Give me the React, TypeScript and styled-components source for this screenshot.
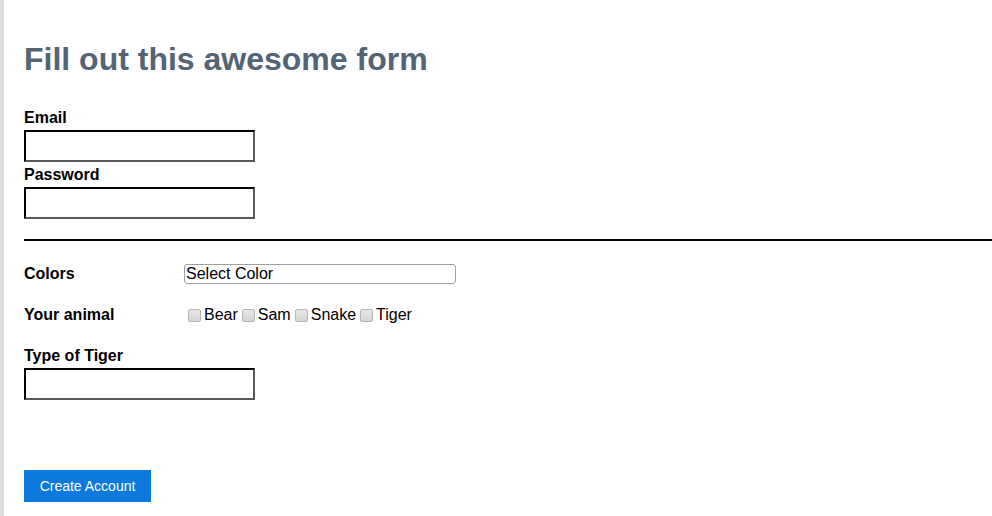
import React from "react";
import styled, { createGlobalStyle } from "styled-components";

const Global = createGlobalStyle`
  html, body { margin: 0; padding: 0; background: #fff; }
  body { font-family: "Liberation Sans", Arial, sans-serif; color: #000; }
`;

const Page = styled.div`
  min-height: 516px;
  box-sizing: border-box;
  border-left: 4px solid #dcdcdc;
  padding: 20px 0 0 20px;
`;

const Title = styled.h1`
  margin: 21px 0 31px;
  font-size: 32px;
  line-height: 37px;
  font-weight: bold;
  color: #536474;
`;

const Form = styled.form`
  display: flex;
  flex-direction: column;
`;

const FieldLabel = styled.label`
  display: block;
  font-size: 16px;
  line-height: 18px;
  font-weight: bold;
  margin: 0 0 3px;
`;

const TextInput = styled.input`
  display: block;
  box-sizing: border-box;
  width: 231px;
  height: 32px;
  margin: 0 0 4px;
  border-width: 2px;
  border-style: solid;
  border-color: #000 #5a5a5a #5a5a5a #000;
  padding: 0 4px;
  font-size: 16px;
  font-family: inherit;
  outline: none;
`;

const Rule = styled.hr`
  margin: 16px 0 23px;
  border: 0;
  height: 2px;
  background: #000;
`;

const Row = styled.div<{ $gap?: number }>`
  display: grid;
  grid-template-columns: 160px 1fr;
  align-items: center;
  margin-bottom: ${(p) => p.$gap ?? 22}px;
`;

const RowLabel = styled.span`
  font-size: 16px;
  line-height: 18px;
  font-weight: bold;
`;

const Select = styled.select`
  appearance: none;
  -webkit-appearance: none;
  box-sizing: border-box;
  width: 272px;
  height: 20px;
  border: 1px solid #a0a0a0;
  border-radius: 3px;
  background: #fff;
  padding: 0 1px;
  font-size: 16px;
  line-height: 18px;
  font-family: inherit;
  color: #000;
`;

const Options = styled.div`
  display: flex;
  align-items: center;
  font-size: 16px;
  line-height: 18px;
`;

const Choice = styled.label`
  display: flex;
  align-items: center;
`;

const Box = styled.input`
  appearance: none;
  -webkit-appearance: none;
  box-sizing: border-box;
  width: 13px;
  height: 13px;
  margin: 0 3px 0 4px;
  border: 1px solid #b4b4b4;
  border-radius: 2px;
  background: linear-gradient(#e8e8e8, #d4d4d4);
`;

const Spacer = styled.div`
  height: 66px;
`;

const Button = styled.button`
  align-self: flex-start;
  width: 127px;
  height: 32px;
  border: 0;
  background: #0c79dd;
  color: #fff;
  font-size: 14px;
  font-family: inherit;
  padding: 0;
`;

export default function App() {
  const animals = ["Bear", "Sam", "Snake", "Tiger"];
  return (
    <>
      <Global />
      <Page>
        <Title>Fill out this awesome form</Title>
        <Form onSubmit={(e) => e.preventDefault()}>
          <FieldLabel htmlFor="email">Email</FieldLabel>
          <TextInput id="email" type="email" />
          <FieldLabel htmlFor="password">Password</FieldLabel>
          <TextInput id="password" type="password" />
          <Rule />
          <Row>
            <RowLabel>Colors</RowLabel>
            <Select defaultValue="">
              <option value="">Select Color</option>
            </Select>
          </Row>
          <Row $gap={23}>
            <RowLabel>Your animal</RowLabel>
            <Options>
              {animals.map((a) => (
                <Choice key={a}>
                  <Box type="checkbox" />
                  {a}
                </Choice>
              ))}
            </Options>
          </Row>
          <FieldLabel htmlFor="tiger">Type of Tiger</FieldLabel>
          <TextInput id="tiger" type="text" />
          <Spacer />
          <Button type="submit">Create Account</Button>
        </Form>
      </Page>
    </>
  );
}
